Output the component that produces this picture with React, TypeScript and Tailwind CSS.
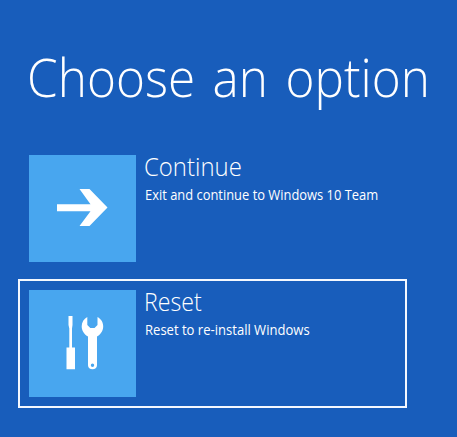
import type { ReactNode } from "react";

function ArrowIcon() {
  return (
    <svg className="size-[107px]" viewBox="0 0 107 107" fill="#fff">
      <path d="M28 49.2H61.5L50.5 34H60.5L78.5 52.5L60.5 71H50.5L61.5 56.2H28Z" />
    </svg>
  );
}

function ToolsIcon() {
  return (
    <svg className="size-[107px]" viewBox="0 0 107 107" fill="#fff">
      <path d="M39.500 26H43.500V35L43 38.500V57.500H46V79.300H37.500V57.500H40.300V38.500L39.500 35Z" />
      <path
        fillRule="evenodd"
        d="M58.300 27V35L61.300 38H65.500L68.500 35V27C72 28.800 74.200 32.300 74.200 36.300C74.200 40.800 71.700 44.500 68 46.500V75.200C68 77.700 66 79.300 63.500 79.300S59 77.700 59 75.200V46.500C55.300 44.500 52.700 40.800 52.700 36.300C52.700 32.300 54.800 28.800 58.300 27ZM63.500 73.500A1.700 1.700 0 1 0 63.500 76.900A1.700 1.700 0 1 0 63.500 73.500Z"
      />
    </svg>
  );
}

type OptionProps = {
  icon: ReactNode;
  title: string;
  titleClass: string;
  text: string;
  textClass: string;
  selected?: boolean;
};

function Option({ icon, title, titleClass, text, textClass, selected }: OptionProps) {
  return (
    <button
      className={`flex h-[129px] w-[389px] items-start border-2 pt-[9px] pl-[9px] text-left ${
        selected ? "border-[#f4f8ff]" : "border-transparent"
      }`}
    >
      <span className="size-[107px] shrink-0 bg-[#48a6ef]">{icon}</span>
      <span className="flex flex-col whitespace-nowrap pl-[9px]">
        <span
          className={`-mt-[4px] -ml-px origin-left text-[26px] leading-[30px] font-light ${titleClass}`}
        >
          {title}
        </span>
        <span className={`mt-[4px] origin-left text-[14px] leading-5 ${textClass}`}>{text}</span>
      </span>
    </button>
  );
}

export default function App() {
  return (
    <main className="h-[437px] w-[457px] overflow-hidden bg-[#185dbb] pt-[41px] pl-[18px] font-['Open_Sans','Noto_Sans',sans-serif] text-white">
      <h1 className="ml-[9px] h-[103px] origin-left scale-x-[0.933] text-[53px] leading-[72px] font-light [word-spacing:5px] whitespace-nowrap">
        Choose an option
      </h1>
      <div className="flex flex-col gap-[6px]">
        <Option
          icon={<ArrowIcon />}
          title="Continue"
          titleClass="scale-x-[0.92]"
          text="Exit and continue to Windows 10 Team"
          textClass="scale-x-[0.922]"
        />
        <Option
          icon={<ToolsIcon />}
          title="Reset"
          titleClass="scale-x-[0.89]"
          text="Reset to re-install Windows"
          textClass="scale-x-[0.932]"
          selected
        />
      </div>
    </main>
  );
}
